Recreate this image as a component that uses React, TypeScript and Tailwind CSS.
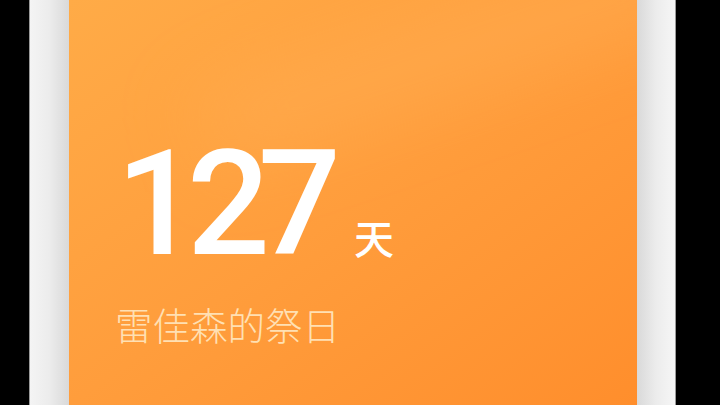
import React from "react";

const Bezel = ({ side }: { side: "left" | "right" }) => (
  <div
    className={
      side === "left"
        ? "w-[40px] h-full border-l border-[#9a9a9a] bg-gradient-to-r from-[#f4f4f4] via-[#ececec] to-[#d9d9d9]"
        : "w-[39px] h-full border-r border-[#9a9a9a] bg-gradient-to-r from-[#d9d9d9] via-[#ececec] to-[#f6f6f6]"
    }
  />
);

export default function App() {
  return (
    <div className="w-[720px] h-[405px] bg-black flex overflow-hidden">
      <div className="w-[29px] h-full shrink-0" />
      <Bezel side="left" />
      <div className="relative flex-1 h-full overflow-hidden bg-gradient-to-br from-[#ffab47] via-[#ff9d3c] to-[#ff8e2c]">
        {/* soft light streak in the upper right */}
        <div className="absolute -right-[80px] top-[20px] w-[520px] h-[60px] rotate-[-18deg] bg-[#ffb25a] opacity-50 blur-2xl" />
        <div className="relative flex flex-col pl-[46px] pt-[132px]">
          <div className="flex items-baseline">
            <span className="text-[146px] leading-none font-medium text-white tracking-[-12px] font-['Roboto',sans-serif] ml-[1px]">
              127
            </span>
            <span className="ml-[25px] text-[40px] leading-none font-medium text-white font-['Noto_Sans_CJK_SC',sans-serif]">
              天
            </span>
          </div>
          <div className="mt-[27px] text-[37.5px] leading-none text-[#ffe0b3] font-['Noto_Sans_CJK_SC',sans-serif] font-light">
            雷佳森的祭日
          </div>
        </div>
      </div>
      <Bezel side="right" />
      <div className="w-[44px] h-full shrink-0" />
    </div>
  );
}
